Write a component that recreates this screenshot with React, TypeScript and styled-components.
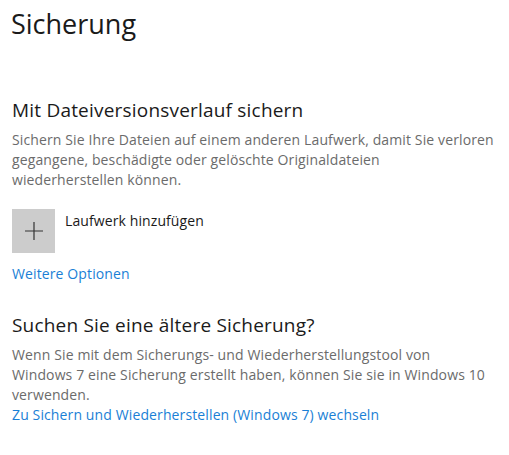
import styled, { createGlobalStyle } from "styled-components";

const GlobalStyle = createGlobalStyle`
  html, body {
    margin: 0;
    padding: 0;
    background: #ffffff;
  }
  body {
    font-family: "Open Sans", "Noto Sans", "Liberation Sans", sans-serif;
    color: #000;
  }
`;

const Page = styled.div`
  width: 509px;
  height: 455px;
  padding: 0 0 0 12px;
  box-sizing: border-box;
  overflow: hidden;
`;

const Title = styled.h1`
  margin: 0 0 0 -1px;
  padding-top: 4px;
  font-size: 27px;
  font-weight: 400;
  line-height: 40px;
  color: #1a1a1a;
`;

const Section = styled.section<{ $top: number }>`
  margin-top: ${({ $top }) => $top}px;
`;

const Heading = styled.h2`
  margin: 0;
  font-size: 19px;
  font-weight: 400;
  line-height: 26px;
  letter-spacing: 0.2px;
  color: #1a1a1a;
`;

const Text = styled.p`
  margin: 7px 0 0;
  font-size: 14px;
  line-height: 20px;
  letter-spacing: 0.12px;
  color: #6b6b6b;
  white-space: nowrap;
`;

const Line = styled.span`
  display: block;
`;

const AddRow = styled.div`
  display: flex;
  align-items: flex-start;
  gap: 10px;
  margin-top: 19px;
`;

const AddButton = styled.button`
  width: 43px;
  height: 44px;
  border: none;
  padding: 0;
  background: #cccccc;
  display: flex;
  align-items: center;
  justify-content: center;
  cursor: pointer;
`;

const AddLabel = styled.span`
  font-size: 14px;
  line-height: 20px;
  letter-spacing: 0.1px;
  color: #1a1a1a;
  margin-top: 2px;
`;

const Link = styled.a<{ $gap: number }>`
  display: block;
  margin-top: ${({ $gap }) => $gap}px;
  font-size: 14px;
  line-height: 20px;
  letter-spacing: 0.12px;
  color: #1a7fd6;
  text-decoration: none;
  white-space: nowrap;
`;

const PlusIcon = () => (
  <svg width="20" height="20" viewBox="0 0 20 20">
    <path d="M10 1V19M1 10H19" stroke="#333" strokeWidth="1.2" fill="none" />
  </svg>
);

export default function App() {
  return (
    <Page>
      <GlobalStyle />
      <Title>Sicherung</Title>

      <Section $top={53}>
        <Heading>Mit Dateiversionsverlauf sichern</Heading>
        <Text>
          <Line>Sichern Sie Ihre Dateien auf einem anderen Laufwerk, damit Sie verloren</Line>
          <Line>gegangene, beschädigte oder gelöschte Originaldateien</Line>
          <Line>wiederherstellen können.</Line>
        </Text>
        <AddRow>
          <AddButton aria-label="Laufwerk hinzufügen">
            <PlusIcon />
          </AddButton>
          <AddLabel>Laufwerk hinzufügen</AddLabel>
        </AddRow>
        <Link href="#" $gap={11}>Weitere Optionen</Link>
      </Section>

      <Section $top={28}>
        <Heading>Suchen Sie eine ältere Sicherung?</Heading>
        <Text>
          <Line>Wenn Sie mit dem Sicherungs- und Wiederherstellungstool von</Line>
          <Line>Windows 7 eine Sicherung erstellt haben, können Sie sie in Windows 10</Line>
          <Line>verwenden.</Line>
        </Text>
        <Link href="#" $gap={0}>Zu Sichern und Wiederherstellen (Windows 7) wechseln</Link>
      </Section>
    </Page>
  );
}
